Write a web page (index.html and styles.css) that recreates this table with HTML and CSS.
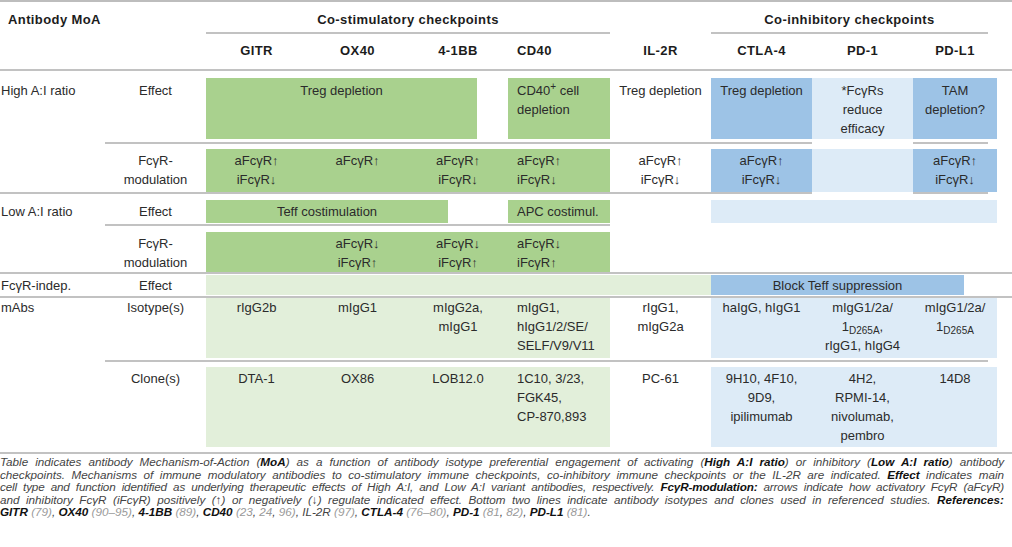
FILE: index.html
```html
<!DOCTYPE html>
<html lang="en">
<head>
<meta charset="utf-8">
<title>Antibody MoA table</title>
<link rel="stylesheet" href="styles.css">
</head>
<body>
<div class="tbl">
  <div class="grid row r-h1">
    <div class="hd lab0 c1-3">Antibody MoA</div>
    <div class="hd c3-7">Co-stimulatory checkpoints</div>
    <div class="hd c8-11 mr9">Co-inhibitory checkpoints</div>
  </div>
  <div class="grid rule"><div class="seg c3-7"></div><div class="seg c8-11 mr9"></div></div>
  <div class="grid row r-h2">
    <div class="hd c3">GITR</div>
    <div class="hd">OX40</div>
    <div class="hd">4-1BB</div>
    <div class="hd lft">CD40</div>
    <div class="hd">IL-2R</div>
    <div class="hd">CTLA-4</div>
    <div class="hd">PD-1</div>
    <div class="hd">PD-L1</div>
  </div>
  <div class="grid rule"><div class="seg c-all"></div></div>

  <div class="grid row r-he">
    <div class="lab">High A:I ratio</div>
    <div>Effect</div>
    <div class="g c3-6 mr31">Treg depletion</div>
    <div class="g lft">CD40<sup>+</sup> cell<br>depletion</div>
    <div>Treg depletion</div>
    <div class="b">Treg depletion</div>
    <div class="lb">*FcγRs<br>reduce<br>efficacy</div>
    <div class="b">TAM<br>depletion?</div>
  </div>
  <div class="grid rule"><div class="seg c2-9"></div><div class="seg c10 mr9"></div></div>
  <div class="grid row r-hf">
    <div class="lab"></div>
    <div>FcγR-<br>modulation</div>
    <div class="g">aFcγR↑<br>iFcγR↓</div>
    <div class="g">aFcγR↑</div>
    <div class="g">aFcγR↑<br>iFcγR↓</div>
    <div class="g lft">aFcγR↑<br>iFcγR↓</div>
    <div>aFcγR↑<br>iFcγR↓</div>
    <div class="b">aFcγR↑<br>iFcγR↓</div>
    <div class="lb"></div>
    <div class="b">aFcγR↑<br>iFcγR↓</div>
  </div>
  <div class="grid rule"><div class="seg c1-9"></div><div class="seg c10 mr9"></div></div>

  <div class="grid row r-le">
    <div class="lab">Low A:I ratio</div>
    <div>Effect</div>
    <div class="g c3-6 mr60">Teff costimulation</div>
    <div class="g lft">APC costimul.</div>
    <div></div>
    <div class="lb c8-11"></div>
  </div>
  <div class="grid rule"><div class="seg c2-7"></div></div>
  <div class="grid row r-lf">
    <div class="lab"></div>
    <div>FcγR-<br>modulation</div>
    <div class="g"></div>
    <div class="g">aFcγR↓<br>iFcγR↑</div>
    <div class="g">aFcγR↓<br>iFcγR↑</div>
    <div class="g lft">aFcγR↓<br>iFcγR↑</div>
  </div>
  <div class="grid rule"><div class="seg c-all"></div></div>

  <div class="grid row r-fi">
    <div class="lab">FcγR-indep.</div>
    <div>Effect</div>
    <div class="lg c3-8"></div>
    <div class="b c8-11 mr33">Block Teff suppression</div>
  </div>
  <div class="grid rule"><div class="seg c-all"></div></div>

  <div class="grid row r-is">
    <div class="lab">mAbs</div>
    <div>Isotype(s)</div>
    <div class="lg">rIgG2b</div>
    <div class="lg">mIgG1</div>
    <div class="lg">mIgG2a,<br>mIgG1</div>
    <div class="lg lft">mIgG1,<br>hIgG1/2/SE/<br>SELF/V9/V11</div>
    <div>rIgG1,<br>mIgG2a</div>
    <div class="lb">haIgG, hIgG1</div>
    <div class="lb">mIgG1/2a/<br>1<sub>D265A</sub>,<br>rIgG1, hIgG4</div>
    <div class="lb">mIgG1/2a/<br>1<sub>D265A</sub></div>
  </div>
  <div class="grid rule"><div class="seg c2-11 mr9"></div></div>
  <div class="grid row r-cl">
    <div class="lab"></div>
    <div>Clone(s)</div>
    <div class="lg">DTA-1</div>
    <div class="lg">OX86</div>
    <div class="lg">LOB12.0</div>
    <div class="lg lft">1C10, 3/23,<br>FGK45,<br>CP-870,893</div>
    <div>PC-61</div>
    <div class="lb">9H10, 4F10,<br>9D9,<br>ipilimumab</div>
    <div class="lb">4H2,<br>RPMI-14,<br>nivolumab,<br>pembro</div>
    <div class="lb">14D8</div>
  </div>
  <div class="grid rule"><div class="seg c-all"></div></div>
</div>

<div class="cap">
  <div class="ln">Table indicates antibody Mechanism-of-Action (<b>MoA</b>) as a function of antibody isotype preferential engagement of activating (<b>High A:I ratio</b>) or inhibitory (<b>Low A:I ratio</b>) antibody</div>
  <div class="ln">checkpoints. Mechanisms of immune modulatory antibodies to co-stimulatory immune checkpoints, co-inhibitory immune checkpoints or the IL-2R are indicated. <b>Effect</b> indicates main</div>
  <div class="ln tight">cell type and function identified as underlying therapeutic effects of High A:I, and Low A:I variant antibodies, respectively. <b>FcγR-modulation:</b> arrows indicate how activatory FcγR (aFcγR)</div>
  <div class="ln">and inhibitory FcγR (iFcγR) positively (↑) or negatively (↓) regulate indicated effect. Bottom two lines indicate antibody isotypes and clones used in referenced studies. <b>References:</b></div>
  <div class="ln last"><b>GITR</b> <span class="ref">(79)</span>, <b>OX40</b> <span class="ref">(90–95)</span>, <b>4-1BB</b> <span class="ref">(89)</span>, <b>CD40</b> <span class="ref">(23</span>, <span class="ref">24</span>, <span class="ref">96)</span>, IL-2R <span class="ref">(97)</span>, <b>CTLA-4</b> <span class="ref">(76–80)</span>, <b>PD-1</b> <span class="ref">(81</span>, <span class="ref">82)</span>, <b>PD-L1</b> <span class="ref">(81)</span>.</div>
</div>
</body>
</html>
```

FILE: styles.css
```css
* {
  box-sizing: border-box;
  margin: 0;
  padding: 0;
}

body {
  margin: 0;
  width: 1012px;
  background: #ffffff;
  font-family: "Liberation Sans", Arial, sans-serif;
  font-size: 13px;
  line-height: 19px;
  color: #2b2b2b;
}

.tbl {
  border-top: 2px solid #bdbdbd;
}

.grid {
  display: grid;
  grid-template-columns: 105px 101px 101px 101px 100px 102px 101px 101px 101px 84px 15px;
}

.row > div {
  text-align: center;
}

.row > .lab {
  text-align: left;
  padding-left: 1px;
}

.row > .lft {
  text-align: left;
  padding-left: 9px;
}

.hd {
  font-weight: bold;
  color: #1c1c1c;
  letter-spacing: 0.4px;
}

.row > .lab0 {
  text-align: left;
  padding-left: 8px;
}

/* rules */
.rule {
  height: 2px;
}

.seg {
  background: #c2c2c2;
}

/* column spans */
.c-all { grid-column: 1 / -1; }
.c1-3 { grid-column: 1 / 3; }
.c1-9 { grid-column: 1 / 9; }
.c2-7 { grid-column: 2 / 7; }
.c2-9 { grid-column: 2 / 9; }
.c2-11 { grid-column: 2 / 11; }
.c3 { grid-column: 3; }
.c3-6 { grid-column: 3 / 6; }
.c3-7 { grid-column: 3 / 7; }
.c3-8 { grid-column: 3 / 8; }
.c8-11 { grid-column: 8 / 11; }
.c10 { grid-column: 10 / 11; }

.mr9 { margin-right: 9px; }
.mr31 { margin-right: 31px; }
.mr33 { margin-right: 33px; }
.mr60 { margin-right: 60px; }

/* fills */
.g { background: #a9d18e; }
.lg { background: #e2efda; }
.b { background: #9dc3e6; }
.lb { background: #ddebf7; }

/* row spacing */
.r-h1 { padding: 8px 0 3px; }
.r-h2 { padding: 7px 0 9px; }

.r-he { padding: 7px 0 3px; }
.r-he > div { padding-top: 3px; padding-bottom: 1px; }

.r-hf { padding: 5px 0 0; }
.r-hf > div { padding-top: 2px; padding-bottom: 3px; }

.r-le { padding: 6px 0 1px; }
.r-le > div { padding-top: 2px; padding-bottom: 2px; }

.r-lf { padding: 6px 0 0; }
.r-lf > div { padding-top: 2px; padding-bottom: 0; }

.r-fi { padding: 1px 0 1px; }
.r-fi > div { padding-top: 1px; padding-bottom: 0; }

.r-is { padding: 0 0 2px; }
.r-is > div { padding-top: 0; padding-bottom: 3px; }

.r-cl { padding: 5px 0 5px; }
.r-cl > div { padding-top: 2px; padding-bottom: 2px; }

sup {
  font-size: 10px;
  line-height: 0;
  vertical-align: 5px;
}

sub {
  font-size: 10px;
  line-height: 0;
  vertical-align: -3px;
}

/* caption */
.cap {
  width: 1004px;
  padding-top: 2px;
  font-style: italic;
  font-size: 11.7px;
  line-height: 12.5px;
  color: #444444;
}

.cap b {
  color: #111111;
}

.ln {
  text-align: justify;
  text-align-last: justify;
  white-space: nowrap;
}

.ln.tight {
  letter-spacing: -0.15px;
}

.ln.last {
  text-align-last: left;
}

.ref {
  color: #9a9a9a;
}
```
